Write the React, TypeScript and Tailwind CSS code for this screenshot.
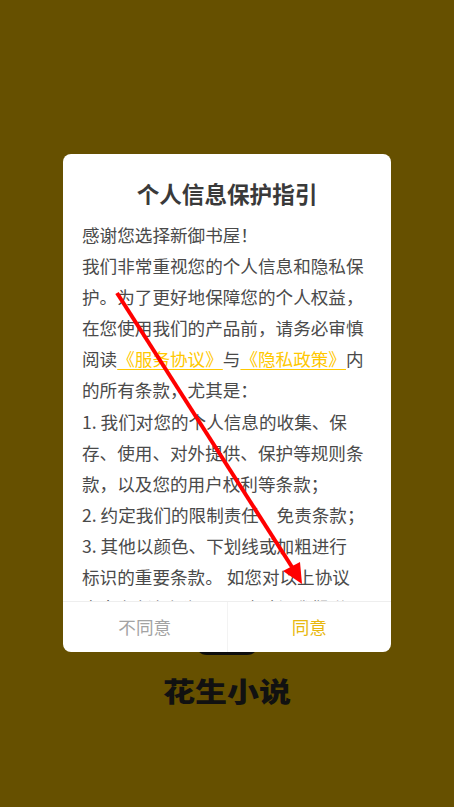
const cjk = "font-['Noto_Sans_CJK_SC','Noto_Sans',sans-serif]";

function Arrow() {
  return (
    <svg className="absolute inset-0 z-20 pointer-events-none" width="454" height="807" viewBox="0 0 454 807">
      <line x1="117" y1="293" x2="292" y2="567" stroke="#ff0000" strokeWidth="4" />
      <polygon points="300,562 302,584 283,571" fill="#ff0000" />
    </svg>
  );
}

export default function App() {
  return (
    <div className={`relative w-[454px] h-[807px] overflow-hidden bg-[#665000] ${cjk}`}>
      {/* splash behind the dialog */}
      <div className="flex flex-col items-center pt-[591px]">
        <div className="w-[64px] h-[64px] rounded-[12px] bg-[#0d0d0d]" />
        <div className="mt-[15px] text-[32px] leading-[40px] font-black text-[#111111] scale-y-[0.85]">花生小说</div>
      </div>

      {/* dialog */}
      <div className="absolute inset-0 z-10 flex items-start justify-center pt-[154px]">
        <div className="w-[328px] h-[498px] bg-white rounded-[8px] flex flex-col overflow-hidden">
          <div className="h-[447px] overflow-hidden">
            <h1 className="pt-[24px] text-center text-[22.6px] leading-[32px] font-bold text-[#3a3a3a]">个人信息保护指引</h1>
            <div className="mt-[9px] pl-[19px] pr-[21px] text-[17.6px] leading-[31.1px] text-[#4a4a4a]">
              <p>感谢您选择新御书屋！</p>
              <p>
                我们非常重视您的个人信息和隐私保护。为了更好地保障您的个人权益，在您使用我们的产品前，请务必审慎阅读
                <span className="text-[#ffc800] underline underline-offset-[3px]">《服务协议》</span>与
                <span className="text-[#ffc800] underline underline-offset-[3px]">《隐私政策》</span>
                内的所有条款，尤其是：
              </p>
              <p>1. 我们对您的个人信息的收集、保存、使用、对外提供、保护等规则条款，以及您的用户权利等条款；</p>
              <p>2. 约定我们的限制责任、免责条款；</p>
              <p>
                3. 其他以颜色、下划线或加粗进行
                <br />
                标识的重要条款。 如您对以上协议
                <br />
                内容有任何疑问，可随时与我们联系。
              </p>
            </div>
          </div>
          <div className="h-[51px] shrink-0 flex border-t border-[#eeeeee] text-[17.6px]">
            <div className="flex-1 flex items-center justify-center text-[#a3a3a3] border-r border-[#f3f3f3]">不同意</div>
            <div className="flex-1 flex items-center justify-center text-[#e8b80e]">同意</div>
          </div>
        </div>
      </div>

      <Arrow />
    </div>
  );
}
